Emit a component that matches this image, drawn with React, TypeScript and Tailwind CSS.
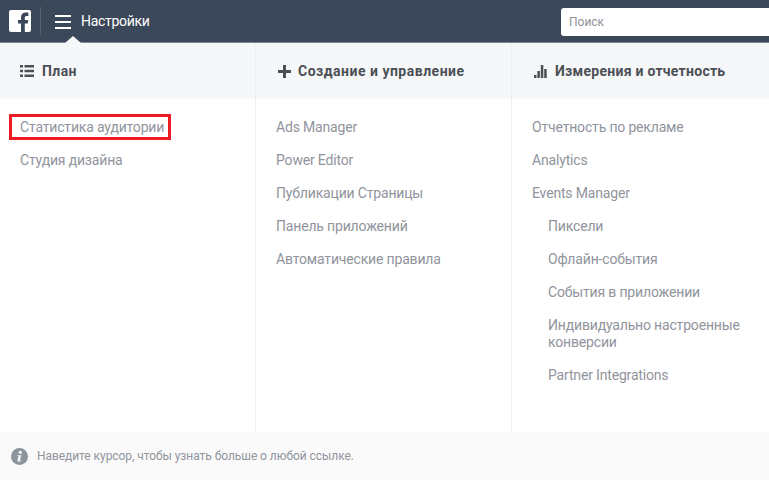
const plan = ['Студия дизайна']
const create = ['Ads Manager', 'Power Editor', 'Публикации Страницы', 'Панель приложений', 'Автоматические правила']
const reports = ['Отчетность по рекламе', 'Analytics', 'Events Manager']
const pixels = ['Пиксели', 'Офлайн-события', 'События в приложении', 'Индивидуально настроенные конверсии', 'Partner Integrations']

function ListIcon() {
  return (
    <svg width="14" height="12" viewBox="0 0 14 12" className="fill-[#4b4f56]">
      <path d="M0 0h3v2.500H0zM4.500 0H14v2.500H4.500zM0 4.700h3v2.500H0zM4.500 4.700H14v2.500H4.500zM0 9.400h3V12H0zM4.500 9.400H14V12H4.500z" />
    </svg>
  )
}

function PlusIcon() {
  return (
    <svg width="13" height="13" viewBox="0 0 13 13" className="fill-[#4b4f56]">
      <path d="M5 0h3v5h5v3H8v5H5V8H0V5h5z" />
    </svg>
  )
}

function BarsIcon() {
  return (
    <svg width="13" height="13" viewBox="0 0 13 13" className="fill-[#4b4f56]">
      <path d="M0 10h2.500v3H0zM3.400 6h2.500v7H3.400zM6.800 0h2.500v13H6.800zM10.200 4h2.500v9h-2.500z" />
    </svg>
  )
}

function ColumnHead({ icon, title, className }: { icon: React.ReactNode; title: string; className: string }) {
  return (
    <div className={`flex h-[56px] items-center bg-[#f6f7f9] text-[14px] font-bold text-[#4b4f56] ${className}`}>
      {icon}
      <span>{title}</span>
    </div>
  )
}

export default function App() {
  return (
    <div className="flex h-[480px] w-[769px] flex-col overflow-hidden bg-white font-['Roboto',sans-serif]">
      {/* top bar */}
      <div className="relative flex h-[43px] shrink-0 items-center border-b border-[#7f8893] bg-[#3b4859]">
        <div className="ml-[9px] flex h-[22px] w-[22px] items-end justify-end overflow-hidden rounded-[2px] bg-white">
          <svg width="14" height="20" viewBox="0 0 14 20" className="fill-[#3b4859]">
            <path d="M4 20V11.500H1V8h3V5.500C4 2.300 6 .6 8.700.6c1.300 0 2.400.1 2.700.1v3.200H9.600C8.100 3.900 7.800 4.600 7.800 5.700V8h3.500l-.5 3.500h-3V20z" />
          </svg>
        </div>
        <div className="ml-[9px] h-[28px] w-px bg-[#56626f]" />
        <div className="ml-[14px] mt-[1px] flex w-[16px] flex-col gap-[4px]">
          <div className="h-[2px] bg-white" />
          <div className="h-[2px] bg-white" />
          <div className="h-[2px] bg-white" />
        </div>
        <span className="ml-[10px] mt-[1px] text-[14px] tracking-[-0.3px] text-white">Настройки</span>
        <div className="absolute bottom-[-1px] left-[65px] h-0 w-0 border-x-[8px] border-b-[7px] border-x-transparent border-b-[#f6f7f9]" />
        <div className="ml-auto mt-[2px] flex h-[28px] w-[208px] items-center rounded-l-[3px] bg-white pl-[8px] text-[12px] text-[#90949c]">
          Поиск
        </div>
      </div>

      <div className="flex min-h-0 flex-1">
        {/* Plan */}
        <div className="flex w-[256px] flex-col border-r border-[#eeeff1]">
          <ColumnHead icon={<span className="mr-[8px]"><ListIcon /></span>} title="План" className="pl-[20px] tracking-[0.4px]" />
          <div className="flex flex-col pt-[15px] pl-[9px] text-[14px] leading-[17px] tracking-[-0.17px] text-[#90949c]">
            <div className="w-fit border-[3px] border-[#ed1c24] py-[1.5px] pr-[4px] pl-[8px] leading-[17px]">Статистика аудитории</div>
            <div className="mt-[12px] pl-[11px]">{plan[0]}</div>
          </div>
        </div>

        {/* Create */}
        <div className="flex w-[256px] flex-col border-r border-[#eeeff1]">
          <ColumnHead icon={<span className="mr-[7px]"><PlusIcon /></span>} title="Создание и управление" className="pl-[22px] tracking-[0.5px]" />
          <div className="flex flex-col gap-[16px] pt-[20px] pl-[20px] text-[14px] leading-[17px] tracking-[-0.17px] text-[#90949c]">
            {create.map((item) => (
              <div key={item}>{item}</div>
            ))}
          </div>
        </div>

        {/* Reports */}
        <div className="flex flex-1 flex-col">
          <ColumnHead icon={<span className="mr-[8px]"><BarsIcon /></span>} title="Измерения и отчетность" className="pl-[22px] tracking-[0.27px]" />
          <div className="flex flex-col gap-[16px] pt-[20px] pl-[20px] pr-[20px] text-[14px] leading-[17px] tracking-[-0.17px] text-[#90949c]">
            {reports.map((item) => (
              <div key={item}>{item}</div>
            ))}
            {pixels.map((item) => (
              <div key={item} className="pl-[16px]">{item}</div>
            ))}
          </div>
        </div>
      </div>

      {/* footer */}
      <div className="flex h-[48px] shrink-0 items-center bg-[#fafafa] pl-[11px] text-[12px] tracking-[-0.06px] text-[#90949c]">
        <svg width="17" height="17" viewBox="0 0 17 17" className="mr-[9px]">
          <circle cx="8.500" cy="8.500" r="8.500" fill="#8d949e" />
          <circle cx="9.300" cy="4.300" r="1.600" fill="#fafafa" />
          <path d="M6.500 7.200h3.700l-1.300 5.300h1.100l-.2.900H6.300l1.200-5.300h-1.200z" fill="#fafafa" />
        </svg>
        <span>Наведите курсор, чтобы узнать больше о любой ссылке.</span>
      </div>
    </div>
  )
}
